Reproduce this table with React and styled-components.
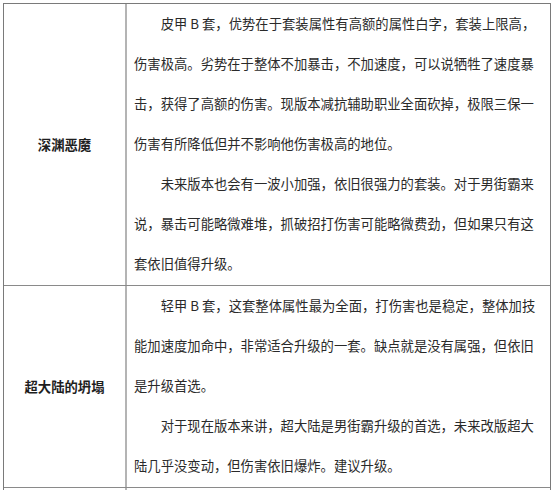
import React from "react";
import styled, { createGlobalStyle } from "styled-components";

const Global = createGlobalStyle`
  html, body { margin: 0; padding: 0; background: #fff; overflow: hidden; }
  body { font-family: "Noto Sans CJK SC", "Microsoft YaHei", sans-serif; }
`;

const Table = styled.div`
  margin: 3px 0 0 3px;
  width: 548px;
  box-sizing: border-box;
  border-top: 1px solid #7a7a7a;
  border-left: 1px solid #7a7a7a;
  border-right: 1px solid #7a7a7a;
`;

const Row = styled.div`
  display: grid;
  grid-template-columns: 123px 1fr;
  border-bottom: 1px solid #8a8a8a;
  min-height: ${(p) => p.$minHeight || 0}px;
`;

const Label = styled.div`
  display: flex;
  align-items: center;
  justify-content: center;
  border-right: 2px solid #b4b4b4;
  font-size: 13.33px;
  font-weight: 700;
  color: #1e1e1e;
`;

const Content = styled.div`
  padding: 0 7px 1px 7px;
  font-size: 13.33px;
  line-height: 40px;
  color: #2a2a2a;
`;

const Para = styled.p`
  margin: 0;
  text-indent: 2em;
`;

const rows = [
  {
    label: "深渊恶魔",
    paras: [
      "皮甲 B 套，优势在于套装属性有高额的属性白字，套装上限高，伤害极高。劣势在于整体不加暴击，不加速度，可以说牺牲了速度暴击，获得了高额的伤害。现版本减抗辅助职业全面砍掉，极限三保一伤害有所降低但并不影响他伤害极高的地位。",
      "未来版本也会有一波小加强，依旧很强力的套装。对于男街霸来说，暴击可能略微难堆，抓破招打伤害可能略微费劲，但如果只有这套依旧值得升级。",
    ],
  },
  {
    label: "超大陆的坍塌",
    paras: [
      "轻甲 B 套，这套整体属性最为全面，打伤害也是稳定，整体加技能加速度加命中，非常适合升级的一套。缺点就是没有属强，但依旧是升级首选。",
      "对于现在版本来讲，超大陆是男街霸升级的首选，未来改版超大陆几乎没变动，但伤害依旧爆炸。建议升级。",
    ],
  },
];

export default function App() {
  return (
    <>
      <Global />
      <Table>
        {rows.map((r) => (
          <Row key={r.label}>
            <Label>{r.label}</Label>
            <Content>
              {r.paras.map((t, i) => (
                <Para key={i}>{t}</Para>
              ))}
            </Content>
          </Row>
        ))}
        <Row $minHeight={60}>
          <Label />
          <Content />
        </Row>
      </Table>
    </>
  );
}
